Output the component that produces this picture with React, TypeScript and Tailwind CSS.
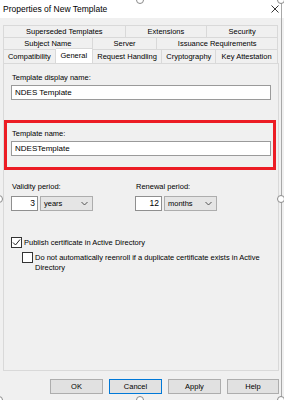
import { FC } from "react";

const Tab: FC<{ label: string; w: string; active?: boolean }> = ({ label, w, active }) => (
  <div
    className={`${w} flex items-center justify-center border-r border-t border-[#d9d9d9] ${
      active ? "bg-white h-[15px] -mt-[1px] relative z-10" : "bg-[#f0f0f0] h-full"
    }`}
  >
    {label}
  </div>
);

const Chevron = () => (
  <svg width="7" height="5" viewBox="0 0 7 5" className="ml-auto mr-[4px]">
    <polyline points="0.5,1 3.5,4 6.5,1" fill="none" stroke="#444" strokeWidth="0.9" />
  </svg>
);

const Period: FC<{ label: string; num: string; unit: string }> = ({ label, num, unit }) => (
  <div className="flex flex-col">
    <div className="h-[10px] leading-[10px] ml-[1px]">{label}</div>
    <div className="flex mt-[4px] gap-[2px]">
      <div className="w-[27px] h-[15px] bg-white border border-[#8f8f8f] flex items-center justify-end pr-[2px] text-[8.5px]">
        {num}
      </div>
      <div className="w-[53px] h-[15px] bg-[#e5e5e5] border border-[#adadad] flex items-center pl-[3px]">
        {unit}
        <Chevron />
      </div>
    </div>
  </div>
);

const Handle: FC<{ cls: string }> = ({ cls }) => (
  <div className={`absolute w-[8px] h-[8px] rounded-full border border-[#8a8a8a] bg-white ${cls}`} />
);

const App: FC = () => {
  return (
    <div
      className="w-[284px] h-[400px] relative overflow-hidden bg-[#f0f0f0] text-black text-[7.5px]"
      style={{ fontFamily: '"Liberation Sans", Arial, sans-serif' }}
    >
      {/* title bar */}
      <div className="h-[18px] bg-white flex items-center pl-[3px] pr-[5px]">
        <span className="text-[8.5px]">Properties of New Template</span>
        <svg width="8" height="8" viewBox="0 0 8 8" className="ml-auto">
          <path d="M0.5 0.5 L7.5 7.5 M7.5 0.5 L0.5 7.5" stroke="#222" strokeWidth="0.9" />
        </svg>
      </div>

      {/* tabs */}
      <div className="mt-[7px] ml-[3px] w-[275px] flex flex-col border-l border-[#d9d9d9]">
        <div className="flex h-[12px]">
          <Tab label="Superseded Templates" w="w-[122px]" />
          <Tab label="Extensions" w="w-[82px]" />
          <Tab label="Security" w="w-[71px]" />
        </div>
        <div className="flex h-[12px]">
          <Tab label="Subject Name" w="w-[89px]" />
          <Tab label="Server" w="w-[65px]" />
          <Tab label="Issuance Requirements" w="w-[121px]" />
        </div>
        <div className="flex h-[14px] items-end">
          <Tab label="Compatibility" w="w-[52px]" />
          <Tab label="General" w="w-[37px]" active />
          <Tab label="Request Handling" w="w-[70px]" />
          <Tab label="Cryptography" w="w-[54px]" />
          <Tab label="Key Attestation" w="w-[62px]" />
        </div>
      </div>

      {/* panel */}
      <div className="ml-[3px] w-[276px] h-[308px] border border-[#d9d9d9] bg-[#f0f0f0] flex flex-col">
        <div className="px-[7px] pt-[9px]">
          <div className="h-[10px] leading-[10px] ml-[1px]">Template display name:</div>
          <div className="mt-[2px] w-[260px] h-[15px] bg-white border border-[#9a9a9a] flex items-center pl-[3px] text-[8px]">
            NDES Template
          </div>
        </div>

        <div className="mt-[20px] w-[272px] h-[50px] border-[3px] border-[#ec1c24] pl-[4px] pt-[6px]">
          <div className="h-[10px] leading-[10px] ml-[1px]">Template name:</div>
          <div className="mt-[2px] w-[260px] h-[15px] bg-white border border-[#9a9a9a] flex items-center pl-[3px] text-[8px]">
            NDESTemplate
          </div>
        </div>

        <div className="px-[7px] mt-[12px] flex gap-[42px]">
          <Period label="Validity period:" num="3" unit="years" />
          <Period label="Renewal period:" num="12" unit="months" />
        </div>

        <div className="pl-[7px] mt-[26px] flex items-center gap-[2px]">
          <div className="w-[11px] h-[11px] border border-[#333] bg-white flex items-center justify-center">
            <svg width="9" height="9" viewBox="0 0 9 9">
              <polyline points="1,4.5 3.5,7 8,1.5" fill="none" stroke="#222" strokeWidth="1" />
            </svg>
          </div>
          <span>Publish certificate in Active Directory</span>
        </div>

        <div className="pl-[18px] mt-[4px] flex items-start gap-[2px]">
          <div className="w-[11px] h-[11px] shrink-0 border border-[#333] bg-white" />
          <span className="leading-[10px] w-[235px] pt-[1px]">
            Do not automatically reenroll if a duplicate certificate exists in Active Directory
          </span>
        </div>
      </div>

      {/* buttons */}
      <div className="mt-[8px] flex justify-end gap-[6px] pr-[5px]">
        <div className="w-[53px] h-[15px] bg-[#e1e1e1] border border-[#adadad] flex items-center justify-center">OK</div>
        <div className="w-[53px] h-[15px] bg-[#e1e1e1] border border-[#0078d7] flex items-center justify-center">Cancel</div>
        <div className="w-[53px] h-[15px] bg-[#e1e1e1] border border-[#adadad] flex items-center justify-center">Apply</div>
        <div className="w-[52px] h-[15px] bg-[#e1e1e1] border border-[#adadad] flex items-center justify-center">Help</div>
      </div>

      {/* selection frame of the screenshot tool */}
      <div className="absolute top-0 bottom-0 left-[281px] w-px bg-[#a8a8a8]" />
      <Handle cls="-left-[5px] top-[195px]" />
      <Handle cls="left-[277px] top-[195px]" />
      <Handle cls="left-[136px] top-[396px]" />
      <Handle cls="left-[277px] top-[396px]" />
      <Handle cls="-left-[5px] top-[396px]" />
      <Handle cls="left-[277px] -top-[4px]" />
      <Handle cls="left-[136px] -top-[4px]" />
    </div>
  );
};

export default App;
